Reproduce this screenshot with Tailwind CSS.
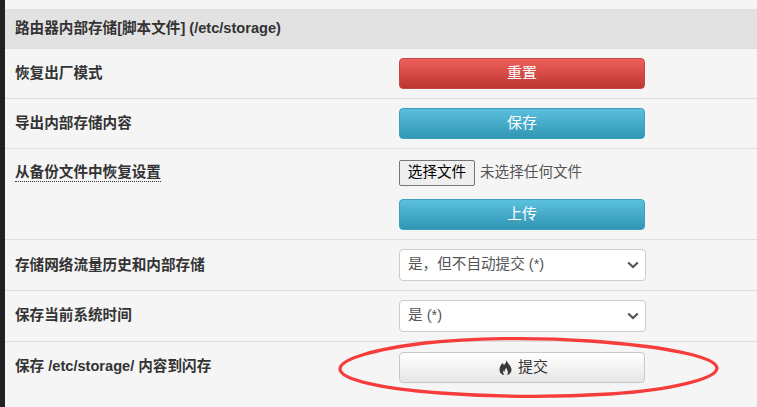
<!DOCTYPE html>
<html lang="zh-CN">
<head>
    <meta charset="UTF-8">
    <title>路由器内部存储</title>
    <script src="https://cdn.jsdelivr.net/npm/@tailwindcss/browser@4"></script>
</head>
<body class="bg-[#f5f5f5] overflow-hidden">
    <div class="relative h-[407px] w-[757px] overflow-hidden border-l-[5px] border-[#222] text-[14.6px] text-[#333] font-['Liberation_Sans','Noto_Sans_CJK_SC',sans-serif]">
        <div class="h-[10px] border-b border-[#e0e0e0]"></div>

        <div class="flex h-[39px] items-center border-b border-[#dddddd] bg-[#e2e2e2] pl-[10px] font-bold">
            路由器内部存储[脚本文件] (/etc/storage)
        </div>

        <div class="flex h-[50px] items-center border-b border-[#dddddd] pl-[10px]">
            <div class="w-[384px] font-bold">恢复出厂模式</div>
            <button class="h-[31px] w-[246px] rounded-[4px] border border-[#c44a46] bg-gradient-to-b from-[#ee5f5b] to-[#bd362f] text-[15px] text-white">重置</button>
        </div>

        <div class="flex h-[50px] items-center border-b border-[#dddddd] pl-[10px]">
            <div class="w-[384px] font-bold">导出内部存储内容</div>
            <button class="h-[31px] w-[246px] rounded-[4px] border border-[#3d9fbc] bg-gradient-to-b from-[#5bc0de] to-[#2f96b4] text-[15px] text-white">保存</button>
        </div>

        <div class="flex h-[91px] items-start border-b border-[#dddddd] pl-[10px] pt-[11px]">
            <div class="w-[384px] pt-[2px] font-bold">
                <span class="border-b border-dotted border-[#333] pb-[1px]">从备份文件中恢复设置</span>
            </div>
            <div class="flex w-[246px] flex-col gap-[13px]">
                <div class="flex items-center gap-[5px]">
                    <button class="h-[26px] w-[76px] rounded-[2px] border border-[#767676] bg-[#efefef] text-[14.6px] text-black">选择文件</button>
                    <span class="text-[#555]">未选择任何文件</span>
                </div>
                <button class="h-[31px] w-[246px] rounded-[4px] border border-[#3d9fbc] bg-gradient-to-b from-[#5bc0de] to-[#2f96b4] text-[15px] text-white">上传</button>
            </div>
        </div>

        <div class="flex h-[51px] items-center border-b border-[#dddddd] pl-[10px]">
            <div class="w-[384px] pt-[1px] font-bold">存储网络流量历史和内部存储</div>
            <div class="relative">
                <select class="h-[32px] w-[247px] appearance-none rounded-[4px] border border-[#cccccc] bg-white pl-[8px] text-[#555]">
                    <option>是&#xFF0C;但不自动提交 (*)</option>
                </select>
                <svg class="absolute right-[7px] top-[12px] h-[8px] w-[12px]" viewBox="0 0 12 8" fill="none" stroke="#555" stroke-width="2.2"><path d="M1.2 1.5 6 6l4.8-4.5"/></svg>
            </div>
        </div>

        <div class="flex h-[51px] items-center border-b border-[#dddddd] pl-[10px]">
            <div class="w-[384px] font-bold">保存当前系统时间</div>
            <div class="relative">
                <select class="h-[32px] w-[247px] appearance-none rounded-[4px] border border-[#cccccc] bg-white pl-[8px] text-[#555]">
                    <option>是 (*)</option>
                </select>
                <svg class="absolute right-[7px] top-[12px] h-[8px] w-[12px]" viewBox="0 0 12 8" fill="none" stroke="#555" stroke-width="2.2"><path d="M1.2 1.5 6 6l4.8-4.5"/></svg>
            </div>
        </div>

        <div class="flex items-start pl-[10px] pt-[10px]">
            <div class="w-[384px] pt-[4px] font-bold">保存 /etc/storage/ 内容到闪存</div>
            <button class="flex h-[31px] w-[246px] items-center justify-center gap-[6px] rounded-[4px] border border-[#c8c8c8] bg-gradient-to-b from-white to-[#e6e6e6] pl-[3px] text-[15px] text-[#333]">
                <svg class="h-[15px] w-[13px]" viewBox="0 0 12 15" fill="#3a3a3a"><path d="M6.500 0c.6 2.400-.7 3.600-2 5C3.800 4.500 3.500 3.600 3.400 2.800 1.300 4.800 0 7 0 9.500 0 12.600 2.200 15 4.800 15 3.600 13.800 3.200 12 4.200 10.200c.2.900.6 1.400 1.100 1.600C5.200 10.200 5.800 8.700 7 7.800c0 1.600 1.400 2.800 1.400 4.600 0 1-.4 1.900-1.100 2.600C10 14.800 12 12.400 12 9.800 12 6.300 8.700 4 6.500 0z"/></svg>
                提交
            </button>
        </div>

        <svg class="pointer-events-none absolute left-[-5px] top-[0px]" width="757" height="407" fill="none">
            <path d="M340 369C340 359 375 349 425 343C470 338 535 337 590 341C660 346 716 356 717 368C717 379 670 390 610 394C560 397 495 397 440 393C385 389 340 380 340 369Z" stroke="#f73c3c" stroke-width="3.3"/>
        </svg>
    </div>
</body>
</html>
